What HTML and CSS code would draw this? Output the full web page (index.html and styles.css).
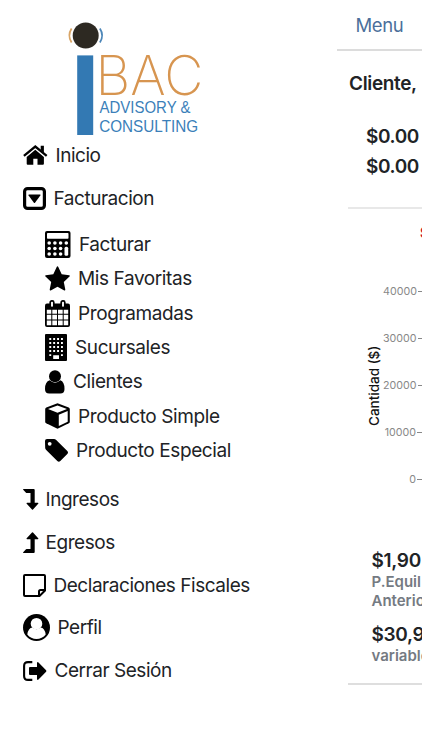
FILE: index.html
```html
<!DOCTYPE html>
<html lang="es">
<head>
  <meta charset="UTF-8">
  <meta name="viewport" content="width=device-width, initial-scale=1.0">
  <title>IBAC Advisory &amp; Consulting</title>
  <link rel="stylesheet" href="styles.css">
</head>
<body>
  <div class="layout">
    <nav class="sidebar">
      <svg class="logo" width="140" height="118" viewBox="66 20 140 118">
        <circle cx="85.7" cy="35.5" r="13" fill="#2d2922"/>
        <path d="M71.6 28.500q-4.500 7 0 14" fill="none" stroke="#d9a566" stroke-width="1.8"/>
        <path d="M99.900 28.500q4.500 7 0 14" fill="none" stroke="#4c86b8" stroke-width="1.8"/>
        <rect x="77.2" y="55.4" width="16" height="79.6" fill="#3379b3"/>
        <text class="logo-name" x="95.500" y="95" textLength="108" lengthAdjust="spacingAndGlyphs">BAC</text>
        <text class="logo-sub" x="99.5" y="112.9" textLength="91" lengthAdjust="spacingAndGlyphs">ADVISORY &amp;</text>
        <text class="logo-sub" x="99.2" y="131.500" textLength="99" lengthAdjust="spacingAndGlyphs">CONSULTING</text>
      </svg>

      <ul class="menu">
        <li class="item">
          <svg width="25" height="20" viewBox="0 0 25 20"><path d="M12.3 4.700l8.600 7.200v6.800q0 1-1 1h-5.400v-6h-4.200v6H4.700q-1 0-1-1v-6.800z"/><path d="M.9 10.800L12.300 1.500l11.400 9.300" fill="none" stroke="#000" stroke-width="2.300"/><path d="M17.700.8h3.200v7l-3.200-2.700z"/></svg>
          <span>Inicio</span>
        </li>
        <li class="item">
          <svg width="23" height="23" viewBox="0 0 23 23"><rect x="1.600" y="1.600" width="19.800" height="19.800" rx="3" fill="none" stroke="#000" stroke-width="3.200"/><path d="M6 7.500h11q.8.200.3 1L12 15.800q-.6.600-1.100 0L5.600 8.500q-.4-.8.400-1z"/></svg>
          <span>Facturacion</span>
        </li>
      </ul>

      <ul class="menu submenu">
        <li class="item">
          <svg width="26" height="27" viewBox="0 0 26 27"><rect width="25.500" height="27" rx="2"/><g fill="#fff"><rect x="2" y="2" width="21.500" height="5.800" rx=".7"/><circle cx="4.200" cy="12" r="1.800"/><circle cx="9.900" cy="12" r="1.800"/><circle cx="15.600" cy="12" r="1.800"/><circle cx="21.300" cy="12" r="1.800"/><circle cx="4.200" cy="17.500" r="1.800"/><circle cx="9.900" cy="17.500" r="1.800"/><circle cx="15.600" cy="17.500" r="1.800"/><circle cx="4.200" cy="23" r="1.800"/><circle cx="9.900" cy="23" r="1.800"/><circle cx="15.600" cy="23" r="1.800"/><rect x="19.500" y="15.800" width="3.700" height="9" rx="1.500"/></g></svg>
          <span>Facturar</span>
        </li>
        <li class="item">
          <svg width="25" height="25" viewBox="0 0 25 25"><path d="M12.500.3q.5 0 .8.700l3.400 7.200 7.500 1.100q1.100.4.300 1.300L18.800 16l1.500 7.600q0 1.100-1 .8l-6.800-3.700-6.800 3.700q-1 .3-1-.8L6.200 16 .5 10.600q-.8-.9.300-1.300l7.500-1.100L11.700 1q.3-.7.800-.7z"/></svg>
          <span>Mis Favoritas</span>
        </li>
        <li class="item">
          <svg width="25" height="27" viewBox="0 0 25 27"><rect y="3.500" width="25" height="23.500" rx="2"/><g fill="#fff"><path d="M1.800 9.700h4.500v4H1.800zM7.300 9.700h4.700v4H7.300zM13 9.700h4.700v4H13zM18.700 9.700h4.500v4h-4.500zM1.800 14.700h4.500v4.800H1.800zM7.300 14.700h4.700v4.800H7.300zM13 14.700h4.700v4.800H13zM18.700 14.700h4.500v4.800h-4.500zM1.800 20.500h4.500v4.700H1.800zM7.300 20.500h4.700v4.700H7.300zM13 20.500h4.700v4.700H13zM18.700 20.500h4.500v4.700h-4.500z"/></g><g fill="#fff" stroke="#000" stroke-width="1.700"><rect x="5.200" y=".9" width="3.600" height="6.700" rx="1.600"/><rect x="16.200" y=".9" width="3.600" height="6.700" rx="1.600"/></g></svg>
          <span>Programadas</span>
        </li>
        <li class="item">
          <svg width="22" height="27" viewBox="0 0 22 27"><rect width="22" height="27" rx="1"/><path d="M4.300 5h14M4.300 9h14M4.300 13h14M4.300 17h14" stroke="#fff" stroke-width="1.900" stroke-dasharray="1.900 2" fill="none"/><path d="M4.300 20.200h1.900v1.800H4.300zM16 20.200h1.900v1.800H16zM8.200 21.200h5.800v3.800H8.200z" fill="#fff"/></svg>
          <span>Sucursales</span>
        </li>
        <li class="item">
          <svg width="20" height="24" viewBox="0 0 20 24"><circle cx="10" cy="6.300" r="6"/><path d="M4.700 10.300Q10 15 15.300 10.300q4.200 1.400 4.200 8.700 0 4.500-4.200 4.500H4.200Q0 23.500 0 19q0-7.300 4.700-8.700z"/></svg>
          <span>Clientes</span>
        </li>
        <li class="item">
          <svg width="25" height="26" viewBox="0 0 25 26"><path d="M12.500.3l11.200 4.200q1.100.5 1.100 1.600v12.600q0 1-1 1.600l-11.300 5.400L1.200 20.300q-1-.6-1-1.600V6.100q0-1.100 1.100-1.600z"/><path d="M12.500 2.400l9.500 3.500-9.500 3.900L3 5.900zM13.800 11.700l8.900-3.800v10.900l-8.900 4.300z" fill="#fff"/></svg>
          <span>Producto Simple</span>
        </li>
        <li class="item">
          <svg width="23" height="23" viewBox="0 0 23 23"><path d="M2 0h7q1.200.1 2.200 1l11.100 11q1.400 1.500 0 3l-7 7q-1.500 1.300-3 0L1.200 11Q.2 10 .2 8.900L0 2Q0 .1 2 0z"/><circle cx="4.700" cy="4.800" r="1.900" fill="#fff"/></svg>
          <span>Producto Especial</span>
        </li>
      </ul>

      <ul class="menu">
        <li class="item item-arrow">
          <svg width="16" height="21" viewBox="0 0 16 21"><path d="M.5 0h10.200q1 0 1 1v12.700h3.100q1 .2.400 1L10 20.600q-.5.500-1 0l-5.300-5.900q-.6-.9.400-1h3.400V4H3.700q-.4 0-.7-.3L.2.700Q-.1.100.5 0z"/></svg>
          <span>Ingresos</span>
        </li>
        <li class="item item-arrow">
          <svg width="16" height="21" viewBox="0 0 16 21"><path d="M.5 21h10.200q1 0 1-1V7.300h3.100q1-.2.400-1L10 .4q-.5-.5-1 0L3.700 6.300q-.6.900.4 1h3.400V17H3.700q-.4 0-.7.300l-2.800 3q-.3.600.3.700z"/></svg>
          <span>Egresos</span>
        </li>
        <li class="item">
          <svg width="23" height="23" viewBox="0 0 23 23"><path d="M2 1h19q1 0 1 1v14.500L16.500 22H2q-1 0-1-1V2q0-1 1-1zM22 16h-4.500q-1.500 0-1.500 1.500V22" fill="none" stroke="#000" stroke-width="2"/></svg>
          <span>Declaraciones Fiscales</span>
        </li>
        <li class="item">
          <svg width="27" height="27" viewBox="0 0 27 27"><circle cx="13.500" cy="13.500" r="13.500"/><path d="M4.300 20.500q1-6.600 5.100-7 4.100 3.600 8.200 0 4.100.4 5.100 7a11.600 11.600 0 0 1-18.400 0z" fill="#fff"/><circle cx="13.500" cy="9.700" r="5.800" fill="#fff"/></svg>
          <span>Perfil</span>
        </li>
        <li class="item">
          <svg width="24" height="20" viewBox="0 0 24 20"><path d="M9.300 1.100H5Q1.100 1.100 1.100 5v10q0 3.900 3.900 3.900h4.300" fill="none" stroke="#000" stroke-width="2.100"/><path d="M7 6.100h7V2q.3-1.400 1.500-.6l7.600 7.900q.6.700 0 1.400l-7.600 7.900q-1.200.8-1.500-.6v-4.100H7q-1 0-1-1V7.100q0-1 1-1z"/></svg>
          <span>Cerrar Sesión</span>
        </li>
      </ul>
    </nav>

    <main class="page">
      <header class="topbar">Menu</header>
      <div class="content">
        <h1>Cliente,</h1>
        <div class="totals">
          <div>$0.00</div>
          <div>$0.00</div>
        </div>

        <section class="chart">
          <div class="legend">$</div>
          <div class="plot">
            <div class="axis-title">Cantidad ($)</div>
            <div class="ticks">
              <div class="tick">40000</div>
              <div class="tick">30000</div>
              <div class="tick">20000</div>
              <div class="tick">10000</div>
              <div class="tick">0</div>
            </div>
          </div>
        </section>

        <section class="stats">
          <div class="stat">
            <div class="amount">$1,90</div>
            <div class="caption">P.Equil</div>
            <div class="caption">Anterior</div>
          </div>
          <div class="stat">
            <div class="amount">$30,9</div>
            <div class="caption">variable</div>
          </div>
        </section>
      </div>
    </main>
  </div>
</body>
</html>
```
FILE: styles.css
```css
* {
  margin: 0;
  padding: 0;
  box-sizing: border-box;
}

body {
  background-color: #fff;
  color: #212326;
  font-family: Inter, "Liberation Sans", sans-serif;
}

.layout {
  display: flex;
  height: 750px;
  overflow: hidden;
}

/* Sidebar */
.sidebar {
  width: 337px;
  flex-shrink: 0;
  padding-top: 20px;
}

.logo {
  display: block;
  margin-left: 66px;
}

.logo-name {
  font-size: 54.6px;
  font-weight: 250;
  fill: #d79550;
}

.logo-sub {
  font-family: "Liberation Sans", sans-serif;
  font-size: 16.2px;
  fill: #3b7fb9;
}

.menu {
  list-style: none;
  padding-left: 23px;
  margin-top: -4px;
}

.item {
  display: flex;
  align-items: center;
  gap: 7.5px;
  height: 42.7px;
  font-size: 19px;
  letter-spacing: -0.46px;
  white-space: nowrap;
}

.item svg {
  flex-shrink: 0;
}

.item-arrow {
  gap: 6.5px;
}

.submenu {
  padding-left: 45px;
  margin-top: 8px;
}

.submenu .item {
  gap: 8px;
  height: 34.3px;
  letter-spacing: -0.4px;
}

.submenu + .menu {
  margin-top: 11px;
}

/* Main page */
.page {
  width: 337px;
  flex-shrink: 0;
}

.topbar {
  height: 51px;
  padding-left: 18.5px;
  border-bottom: 2px solid #dcdcdc;
  color: #4b6f9b;
  font-size: 18.5px;
  letter-spacing: -0.4px;
  line-height: 51px;
}

.content {
  padding-left: 11px;
}

h1 {
  padding: 21px 0 0 1px;
  font-size: 19px;
  font-weight: 600;
  letter-spacing: -0.35px;
  line-height: 24px;
}

.totals {
  height: 113px;
  padding: 26px 0 0 18px;
  border-bottom: 2px solid #e8e8e8;
  font-size: 19px;
  font-weight: 600;
  letter-spacing: -0.4px;
  line-height: 30px;
}

.chart {
  height: 339px;
}

.legend {
  padding: 15px 0 0 72px;
  color: #c8102e;
  font-size: 14px;
  font-weight: 700;
  line-height: 18px;
}

.plot {
  display: flex;
  padding: 26px 0 0 17px;
}

.axis-title {
  width: 18px;
  height: 236px;
  color: #111;
  font-size: 13.5px;
  font-weight: 500;
  line-height: 18px;
  text-align: center;
  writing-mode: vertical-rl;
  transform: rotate(180deg);
}

.ticks {
  width: 40px;
}

.tick {
  display: flex;
  align-items: center;
  justify-content: flex-end;
  height: 47px;
  color: #888;
  font-size: 10.7px;
}

.tick::after {
  content: "";
  width: 6px;
  height: 1px;
  margin-left: 1px;
  background-color: #888;
}

.stats {
  height: 137px;
  padding-left: 23.5px;
  border-bottom: 2px solid #dedede;
}

.stat {
  margin-bottom: 12px;
}

.amount {
  font-size: 19px;
  font-weight: 600;
  letter-spacing: -0.3px;
  line-height: 25px;
}

.caption {
  color: #747a82;
  font-size: 15px;
  font-weight: 600;
  line-height: 18.5px;
}
```
